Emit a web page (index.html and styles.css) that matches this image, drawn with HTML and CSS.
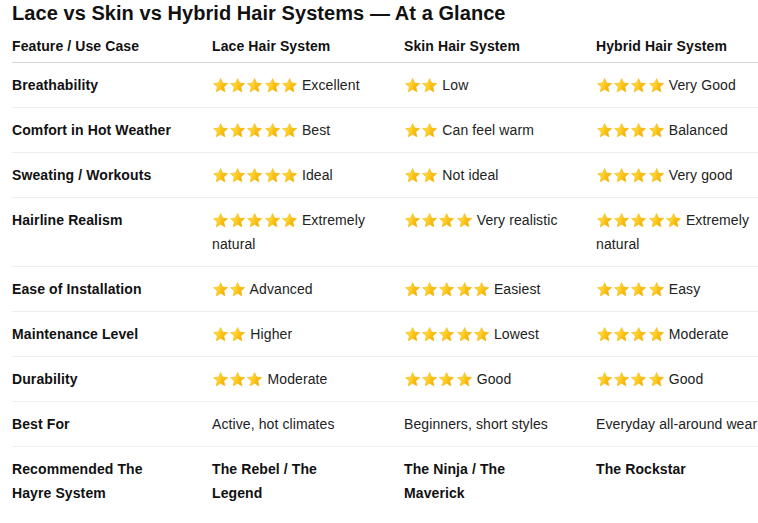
FILE: index.html
```html
<!DOCTYPE html>
<html lang="en">
<head>
<meta charset="utf-8">
<title>Lace vs Skin vs Hybrid Hair Systems</title>
<link rel="stylesheet" href="styles.css">
</head>
<body>
<svg class="defs" width="0" height="0" aria-hidden="true">
  <defs>
    <linearGradient id="sg" x1="0" y1="0" x2="1" y2="1">
      <stop offset="0" stop-color="#ffe45c"/>
      <stop offset="0.55" stop-color="#fdcb1f"/>
      <stop offset="1" stop-color="#f2a900"/>
    </linearGradient>
    <symbol id="star" viewBox="0 0 24 24">
      <polygon points="12,2.2 14.9,8.6 22,9.3 16.6,14 18.2,21 12,17.3 5.8,21 7.4,14 2,9.3 9.1,8.6" fill="url(#sg)" stroke="#f5b90c" stroke-width="0.8" stroke-linejoin="round"/>
      <polygon points="12,2.2 14.9,8.6 22,9.3 16.6,14 18.2,21 12,17.3" fill="#f0a400" opacity="0.25"/>
    </symbol>
  </defs>
</svg>
<main class="page">
  <h2 class="title">Lace vs Skin vs Hybrid Hair Systems — At a Glance</h2>
  <table class="compare">
    <colgroup>
      <col class="c-feature"><col class="c-mid"><col class="c-mid"><col class="c-last">
    </colgroup>
    <thead>
      <tr>
        <th>Feature / Use Case</th>
        <th>Lace Hair System</th>
        <th>Skin Hair System</th>
        <th>Hybrid Hair System</th>
      </tr>
    </thead>
    <tbody>
      <tr>
        <td class="feat">Breathability</td>
        <td><span class="stars"><svg class="st"><use href="#star"/></svg><svg class="st"><use href="#star"/></svg><svg class="st"><use href="#star"/></svg><svg class="st"><use href="#star"/></svg><svg class="st"><use href="#star"/></svg></span> Excellent</td>
        <td><span class="stars"><svg class="st"><use href="#star"/></svg><svg class="st"><use href="#star"/></svg></span> Low</td>
        <td><span class="stars"><svg class="st"><use href="#star"/></svg><svg class="st"><use href="#star"/></svg><svg class="st"><use href="#star"/></svg><svg class="st"><use href="#star"/></svg></span> Very Good</td>
      </tr>
      <tr>
        <td class="feat">Comfort in Hot Weather</td>
        <td><span class="stars"><svg class="st"><use href="#star"/></svg><svg class="st"><use href="#star"/></svg><svg class="st"><use href="#star"/></svg><svg class="st"><use href="#star"/></svg><svg class="st"><use href="#star"/></svg></span> Best</td>
        <td><span class="stars"><svg class="st"><use href="#star"/></svg><svg class="st"><use href="#star"/></svg></span> Can feel warm</td>
        <td><span class="stars"><svg class="st"><use href="#star"/></svg><svg class="st"><use href="#star"/></svg><svg class="st"><use href="#star"/></svg><svg class="st"><use href="#star"/></svg></span> Balanced</td>
      </tr>
      <tr>
        <td class="feat">Sweating / Workouts</td>
        <td><span class="stars"><svg class="st"><use href="#star"/></svg><svg class="st"><use href="#star"/></svg><svg class="st"><use href="#star"/></svg><svg class="st"><use href="#star"/></svg><svg class="st"><use href="#star"/></svg></span> Ideal</td>
        <td><span class="stars"><svg class="st"><use href="#star"/></svg><svg class="st"><use href="#star"/></svg></span> Not ideal</td>
        <td><span class="stars"><svg class="st"><use href="#star"/></svg><svg class="st"><use href="#star"/></svg><svg class="st"><use href="#star"/></svg><svg class="st"><use href="#star"/></svg></span> Very good</td>
      </tr>
      <tr>
        <td class="feat">Hairline Realism</td>
        <td><span class="stars"><svg class="st"><use href="#star"/></svg><svg class="st"><use href="#star"/></svg><svg class="st"><use href="#star"/></svg><svg class="st"><use href="#star"/></svg><svg class="st"><use href="#star"/></svg></span> Extremely natural</td>
        <td><span class="stars"><svg class="st"><use href="#star"/></svg><svg class="st"><use href="#star"/></svg><svg class="st"><use href="#star"/></svg><svg class="st"><use href="#star"/></svg></span> Very realistic</td>
        <td><span class="stars"><svg class="st"><use href="#star"/></svg><svg class="st"><use href="#star"/></svg><svg class="st"><use href="#star"/></svg><svg class="st"><use href="#star"/></svg><svg class="st"><use href="#star"/></svg></span> Extremely natural</td>
      </tr>
      <tr>
        <td class="feat">Ease of Installation</td>
        <td><span class="stars"><svg class="st"><use href="#star"/></svg><svg class="st"><use href="#star"/></svg></span> Advanced</td>
        <td><span class="stars"><svg class="st"><use href="#star"/></svg><svg class="st"><use href="#star"/></svg><svg class="st"><use href="#star"/></svg><svg class="st"><use href="#star"/></svg><svg class="st"><use href="#star"/></svg></span> Easiest</td>
        <td><span class="stars"><svg class="st"><use href="#star"/></svg><svg class="st"><use href="#star"/></svg><svg class="st"><use href="#star"/></svg><svg class="st"><use href="#star"/></svg></span> Easy</td>
      </tr>
      <tr>
        <td class="feat">Maintenance Level</td>
        <td><span class="stars"><svg class="st"><use href="#star"/></svg><svg class="st"><use href="#star"/></svg></span> Higher</td>
        <td><span class="stars"><svg class="st"><use href="#star"/></svg><svg class="st"><use href="#star"/></svg><svg class="st"><use href="#star"/></svg><svg class="st"><use href="#star"/></svg><svg class="st"><use href="#star"/></svg></span> Lowest</td>
        <td><span class="stars"><svg class="st"><use href="#star"/></svg><svg class="st"><use href="#star"/></svg><svg class="st"><use href="#star"/></svg><svg class="st"><use href="#star"/></svg></span> Moderate</td>
      </tr>
      <tr>
        <td class="feat">Durability</td>
        <td><span class="stars"><svg class="st"><use href="#star"/></svg><svg class="st"><use href="#star"/></svg><svg class="st"><use href="#star"/></svg></span> Moderate</td>
        <td><span class="stars"><svg class="st"><use href="#star"/></svg><svg class="st"><use href="#star"/></svg><svg class="st"><use href="#star"/></svg><svg class="st"><use href="#star"/></svg></span> Good</td>
        <td><span class="stars"><svg class="st"><use href="#star"/></svg><svg class="st"><use href="#star"/></svg><svg class="st"><use href="#star"/></svg><svg class="st"><use href="#star"/></svg></span> Good</td>
      </tr>
      <tr>
        <td class="feat">Best For</td>
        <td>Active, hot climates</td>
        <td>Beginners, short styles</td>
        <td>Everyday all-around wear</td>
      </tr>
      <tr class="last">
        <td class="feat">Recommended The Hayre System</td>
        <td class="feat">The Rebel / The Legend</td>
        <td class="feat">The Ninja / The Maverick</td>
        <td class="feat">The Rockstar</td>
      </tr>
    </tbody>
  </table>
</main>
</body>
</html>
```

FILE: styles.css
```css
html, body {
  margin: 0;
  padding: 0;
  background: #ffffff;
}

body {
  font-family: "Liberation Sans", Arial, sans-serif;
  color: #222222;
  overflow: hidden;
}

.defs {
  position: absolute;
  width: 0;
  height: 0;
}

.page {
  padding: 0 12px;
}

.title {
  margin: 0;
  padding-top: 1px;
  font-size: 20px;
  line-height: 24px;
  font-weight: 700;
  color: #111111;
  letter-spacing: 0.06px;
}

.compare {
  width: 752px;
  table-layout: fixed;
  border-collapse: collapse;
  font-size: 14px;
  line-height: 24px;
  letter-spacing: 0.1px;
}

.c-feature { width: 200px; }
.c-mid { width: 192px; }
.c-last { width: 168px; }

.compare th {
  text-align: left;
  font-weight: 700;
  color: #111111;
  padding: 9px 34px 4px 0;
  border-bottom: 1px solid #d6d6d6;
  vertical-align: top;
}

.compare td {
  padding: 10px 34px 10px 0;
  border-bottom: 1px solid #efefef;
  vertical-align: top;
  color: #222222;
}

.compare th:last-child,
.compare td:last-child {
  padding-right: 0;
}

.compare .last td {
  border-bottom: none;
}

.compare td.feat {
  font-weight: 700;
  color: #111111;
}

.stars {
  white-space: nowrap;
  letter-spacing: 0;
}

.st {
  display: inline-block;
  width: 17.2px;
  height: 17px;
  vertical-align: -4px;
}
```
